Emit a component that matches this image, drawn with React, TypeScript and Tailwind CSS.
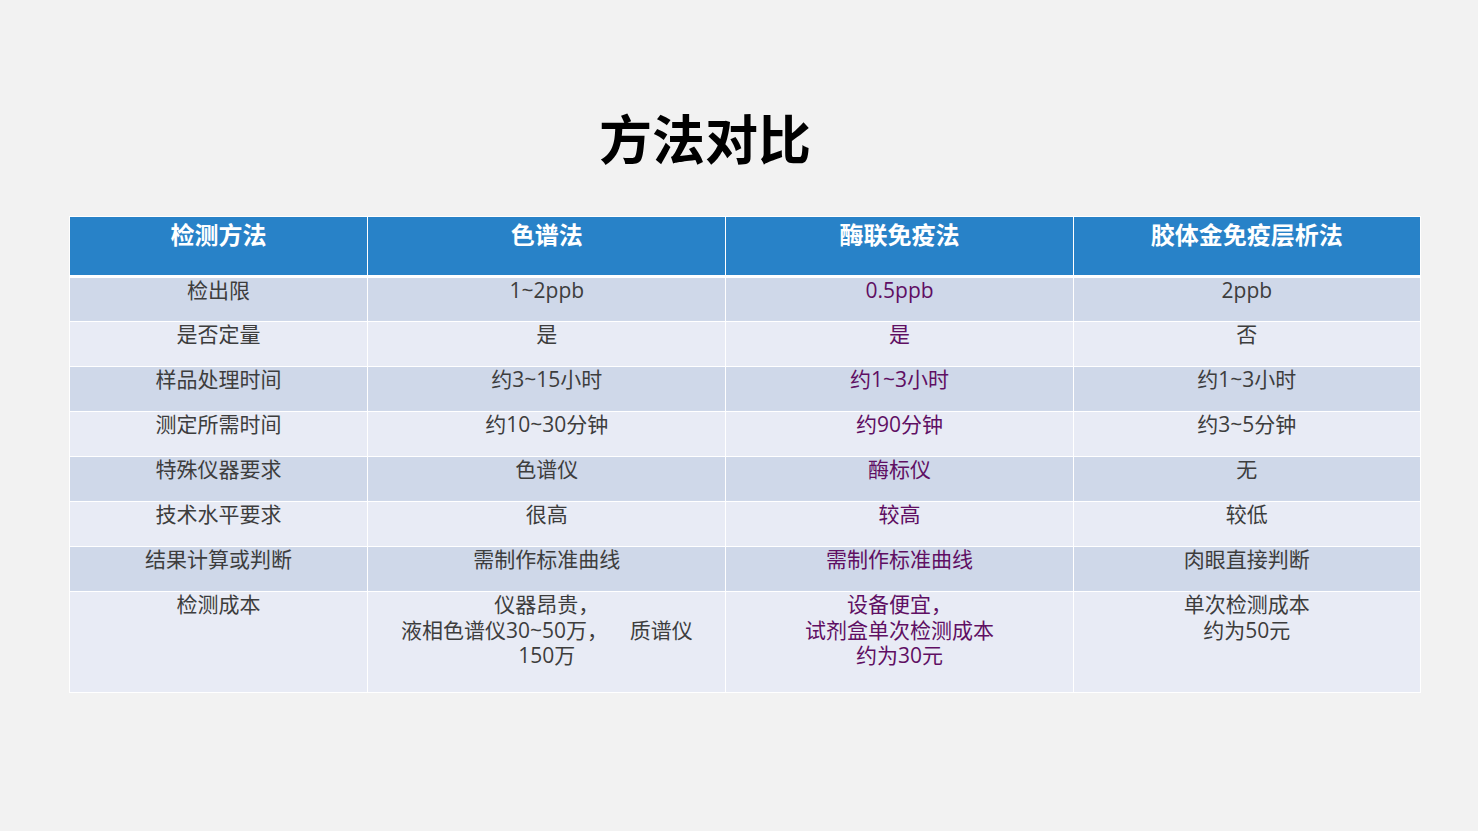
import React from "react";

const font = { fontFamily: '"Open Sans", "Noto Sans CJK SC", sans-serif' };

type Row = { cells: string[]; tall?: boolean };

const rows: Row[] = [
  { cells: ["检出限", "1~2ppb", "0.5ppb", "2ppb"] },
  { cells: ["是否定量", "是", "是", "否"] },
  { cells: ["样品处理时间", "约3~15小时", "约1~3小时", "约1~3小时"] },
  { cells: ["测定所需时间", "约10~30分钟", "约90分钟", "约3~5分钟"] },
  { cells: ["特殊仪器要求", "色谱仪", "酶标仪", "无"] },
  { cells: ["技术水平要求", "很高", "较高", "较低"] },
  { cells: ["结果计算或判断", "需制作标准曲线", "需制作标准曲线", "肉眼直接判断"] },
  {
    cells: [
      "检测成本",
      "仪器昂贵，\n液相色谱仪30~50万，    质谱仪\n150万",
      "设备便宜，\n试剂盒单次检测成本\n约为30元",
      "单次检测成本\n约为50元",
    ],
    tall: true,
  },
];

const headers = ["检测方法", "色谱法", "酶联免疫法", "胶体金免疫层析法"];
const widths = ["w-[298px]", "w-[358px]", "w-[347px]", "w-[347px]"];

export default function App() {
  return (
    <div className="w-[1478px] h-[831px] bg-[#f2f2f2] overflow-hidden" style={font}>
      <div className="flex justify-center pt-[107px] pr-[68px]">
        <h1
          className="text-[53px] leading-[60px] font-bold text-black"
          style={{ fontFamily: '"Noto Sans CJK SC", sans-serif' }}
        >
          方法对比
        </h1>
      </div>
      <div className="pl-[69px] pt-[49px]">
        <table className="border-collapse table-fixed w-[1352px]">
          <colgroup>
            {widths.map((w, i) => (
              <col key={i} className={w} />
            ))}
          </colgroup>
          <thead>
            <tr className="h-[60px]">
              {headers.map((h, i) => (
                <th
                  key={i}
                  className="bg-[#2882c8] text-white text-[24px] leading-[30px] font-bold align-top pt-[3px] border border-white border-b-[3px] text-center"
                >
                  {h}
                </th>
              ))}
            </tr>
          </thead>
          <tbody>
            {rows.map((r, ri) => (
              <tr
                key={ri}
                className={`${r.tall ? "h-[101px]" : "h-[45px]"} ${
                  ri % 2 === 0 ? "bg-[#cfd8e9]" : "bg-[#e8ebf5]"
                }`}
              >
                {r.cells.map((c, ci) => (
                  <td
                    key={ci}
                    className={`border border-white align-top text-center text-[21px] leading-[25.5px] pt-0 whitespace-pre ${
                      ci === 2 ? "text-[#5f0f63]" : "text-[#3d3d3d]"
                    }`}
                  >
                    {c}
                  </td>
                ))}
              </tr>
            ))}
          </tbody>
        </table>
      </div>
    </div>
  );
}
